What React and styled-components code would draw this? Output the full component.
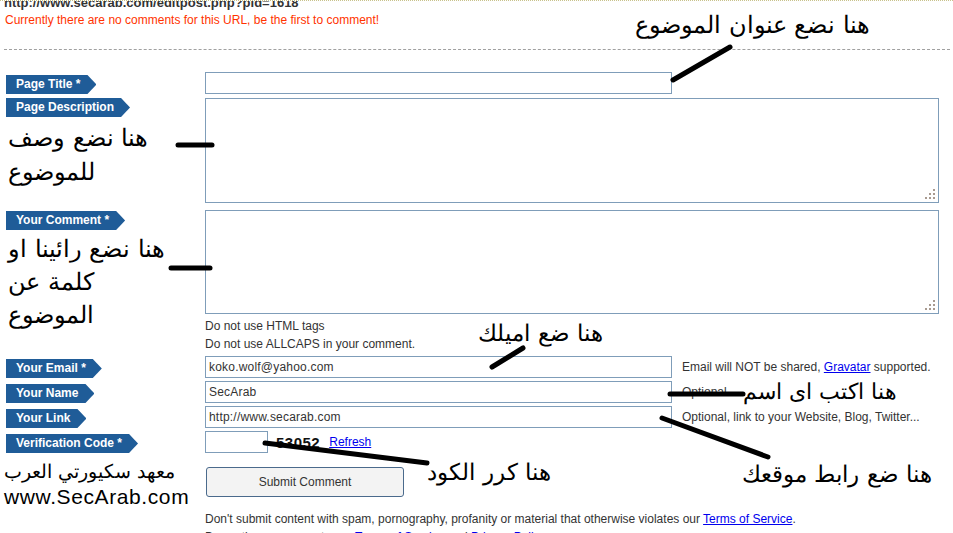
import React from 'react'
import styled, { createGlobalStyle } from 'styled-components'

const Global = createGlobalStyle`
	html, body {
		margin: 0;
		background: #fff;
		font-family: "Liberation Sans", Arial, sans-serif;
		font-size: 12px;
		color: #333;
	}
`

const Page = styled.div`
	position: relative;
	width: 953px;
	height: 533px;
	overflow: hidden;
	box-sizing: border-box;
	padding: 0 3px 0 4px;
	border-top: 1px dotted #c8c28c;
`

const UrlLine = styled.div`
	margin-top: -6px;
	font-weight: bold;
	font-size: 13px;
	line-height: 15px;
	color: #333;
`

const Notice = styled.p`
	margin: 3px 0 0 1px;
	color: #ff3300;
	line-height: 15px;
`

const Divider = styled.hr`
	margin: 21px 0 0;
	border: 0;
	border-top: 1px dashed #a0a0a0;
`

const Row = styled.div`
	display: flex;
	margin-top: ${p => p.$gap}px;
`

const LabelCell = styled.div`
	width: 201px;
	flex-shrink: 0;
`

const FieldCell = styled.div`
	flex: 1;
	display: flex;
	flex-wrap: wrap;
	align-items: center;
	align-content: flex-start;
`

const Tag = styled.span`
	display: inline-block;
	margin: ${p => p.$top || 0}px 0 0 2px;
	height: 19px;
	line-height: 19px;
	padding: 0 16px 0 10px;
	background: #1f5c98;
	color: #fff;
	font-weight: bold;
	font-size: 12px;
	clip-path: polygon(0 0, calc(100% - 9px) 0, 100% 50%, calc(100% - 9px) 100%, 0 100%);
`

const SideNote = styled.div`
	direction: rtl;
	text-align: left;
	margin: ${p => p.$top || 0}px 0 0 4px;
	font-family: "DejaVu Sans", sans-serif;
	font-weight: 300;
	font-size: 24px;
	line-height: ${p => p.$lh}px;
	color: #000;
`

const Input = styled.input`
	box-sizing: border-box;
	width: ${p => p.$w || 467}px;
	height: 22px;
	padding: 0 3px;
	border: 1px solid #7f9db9;
	font: 12px "Liberation Sans", Arial, sans-serif;
	letter-spacing: 0.2px;
	color: #333;
	outline: none;
`

const AreaBox = styled.div`
	position: relative;
	box-sizing: border-box;
	width: 734px;
	height: ${p => p.$h}px;
	border: 1px solid #7f9db9;
	background: #fff;

	&::after {
		content: '';
		position: absolute;
		right: 3px;
		bottom: 3px;
		width: 2px;
		height: 2px;
		background: #a89a90;
		box-shadow:
			-4px 0 0 #a89a90,
			-8px 0 0 #a89a90,
			0 -4px 0 #a89a90,
			-4px -4px 0 #a89a90,
			0 -8px 0 #a89a90;
	}
`

const Hints = styled.div`
	width: 100%;
	margin-top: 3px;
	line-height: 18px;
	color: #333;
`

const Help = styled.span`
	margin-left: 10px;
	color: #333;
	white-space: nowrap;
`

const Link = styled.a`
	color: #0000ee;
	text-decoration: underline;
	cursor: pointer;
`

const Captcha = styled.span`
	margin-left: 8px;
	font-weight: bold;
	font-size: 15px;
	color: #111;
	letter-spacing: 0.5px;
`

const RefreshLink = styled(Link)`
	margin-left: 9px;
`

const SubmitButton = styled.button`
	box-sizing: border-box;
	width: 198px;
	height: 30px;
	margin-left: 1px;
	border: 1px solid #4a6a8c;
	border-radius: 3px;
	background-color: #f3f3f3;
	background-image: radial-gradient(#cccccc 0.5px, transparent 0.7px);
	background-size: 2px 2px;
	font: 12px "Liberation Sans", Arial, sans-serif;
	color: #333;
`

const Disclaimer = styled.div`
	width: 100%;
	margin-top: 13px;
	line-height: 18px;
`

const Brand = styled.div`
	margin: -9px 0 0 0;
	color: #000;
`

const BrandArabic = styled.div`
	direction: rtl;
	text-align: left;
	font-family: "DejaVu Sans", sans-serif;
	font-weight: 300;
	font-size: 19px;
	line-height: 26px;
`

const BrandUrl = styled.div`
	font-size: 21px;
	line-height: 26px;
	letter-spacing: 0.6px;
`

const Callout = styled.div`
	position: absolute;
	right: ${p => p.$r}px;
	top: ${p => p.$y}px;
	direction: rtl;
	white-space: nowrap;
	font-family: "DejaVu Sans", sans-serif;
	font-weight: 300;
	font-size: ${p => p.$size || 23}px;
	line-height: 30px;
	color: #000;
`

const Strokes = styled.svg`
	position: absolute;
	left: 0;
	top: -1px;
	pointer-events: none;
`

const lines = [
	[673, 80, 730, 47],
	[178, 145, 212, 145],
	[171, 268, 210, 268],
	[492, 367, 523, 348],
	[670, 394, 743, 394],
	[662, 418, 768, 457],
	[265, 443, 427, 463],
]

const App = () => (
	<Page>
		<Global />
		<UrlLine>http://www.secarab.com/editpost.php?pid=1618</UrlLine>
		<Notice>Currently there are no comments for this URL, be the first to comment!</Notice>
		<Divider />

		<Row $gap={22}>
			<LabelCell><Tag $top={3}>Page Title *</Tag></LabelCell>
			<FieldCell><Input /></FieldCell>
		</Row>

		<Row $gap={4}>
			<LabelCell>
				<Tag>Page Description</Tag>
				<SideNote $top={4} $lh={34}>هنا نضع وصف<br />للموضوع</SideNote>
			</LabelCell>
			<FieldCell><AreaBox $h={105} /></FieldCell>
		</Row>

		<Row $gap={7}>
			<LabelCell>
				<Tag $top={1}>Your Comment *</Tag>
				<SideNote $top={3} $lh={33}>هنا نضع رائينا او<br />كلمة عن<br />الموضوع</SideNote>
			</LabelCell>
			<FieldCell>
				<AreaBox $h={104} />
				<Hints>Do not use HTML tags<br />Do not use ALLCAPS in your comment.</Hints>
			</FieldCell>
		</Row>

		<Row $gap={3}>
			<LabelCell><Tag $top={3}>Your Email *</Tag></LabelCell>
			<FieldCell>
				<Input defaultValue="koko.wolf@yahoo.com" />
				<Help>Email will NOT be shared, <Link>Gravatar</Link> supported.</Help>
			</FieldCell>
		</Row>

		<Row $gap={3}>
			<LabelCell><Tag $top={3}>Your Name</Tag></LabelCell>
			<FieldCell>
				<Input defaultValue="SecArab" />
				<Help>Optional.</Help>
			</FieldCell>
		</Row>

		<Row $gap={3}>
			<LabelCell><Tag $top={3}>Your Link</Tag></LabelCell>
			<FieldCell>
				<Input defaultValue="http://www.secarab.com" />
				<Help>Optional, link to your Website, Blog, Twitter...</Help>
			</FieldCell>
		</Row>

		<Row $gap={3}>
			<LabelCell><Tag $top={3}>Verification Code *</Tag></LabelCell>
			<FieldCell>
				<Input $w={63} />
				<Captcha>53052</Captcha>
				<RefreshLink>Refresh</RefreshLink>
			</FieldCell>
		</Row>

		<Row $gap={14}>
			<LabelCell>
				<Brand>
					<BrandArabic>معهد سكيورتي العرب</BrandArabic>
					<BrandUrl>www.SecArab.com</BrandUrl>
				</Brand>
			</LabelCell>
			<FieldCell>
				<SubmitButton>Submit Comment</SubmitButton>
				<Disclaimer>
					Don't submit content with spam, pornography, profanity or material that otherwise violates our <Link>Terms of Service</Link>.<br />
					By posting you agree to our <Link>Terms of Service</Link> and <Link>Privacy Policy</Link>.
				</Disclaimer>
			</FieldCell>
		</Row>

		<Callout $r={83} $y={9} $size={24}>هنا نضع عنوان الموضوع</Callout>
		<Callout $r={350} $y={317}>هنا ضع اميلك</Callout>
		<Callout $r={56} $y={376} $size={22}>هنا اكتب اى اسم</Callout>
		<Callout $r={21} $y={458}>هنا ضع رابط موقعك</Callout>
		<Callout $r={402} $y={456}>هنا كرر الكود</Callout>

		<Strokes width="953" height="533" viewBox="0 0 953 533">
			{lines.map(([x1, y1, x2, y2], i) => (
				<line key={i} x1={x1} y1={y1} x2={x2} y2={y2} stroke="#000" strokeWidth="5" strokeLinecap="round" />
			))}
		</Strokes>
	</Page>
)

export default App
